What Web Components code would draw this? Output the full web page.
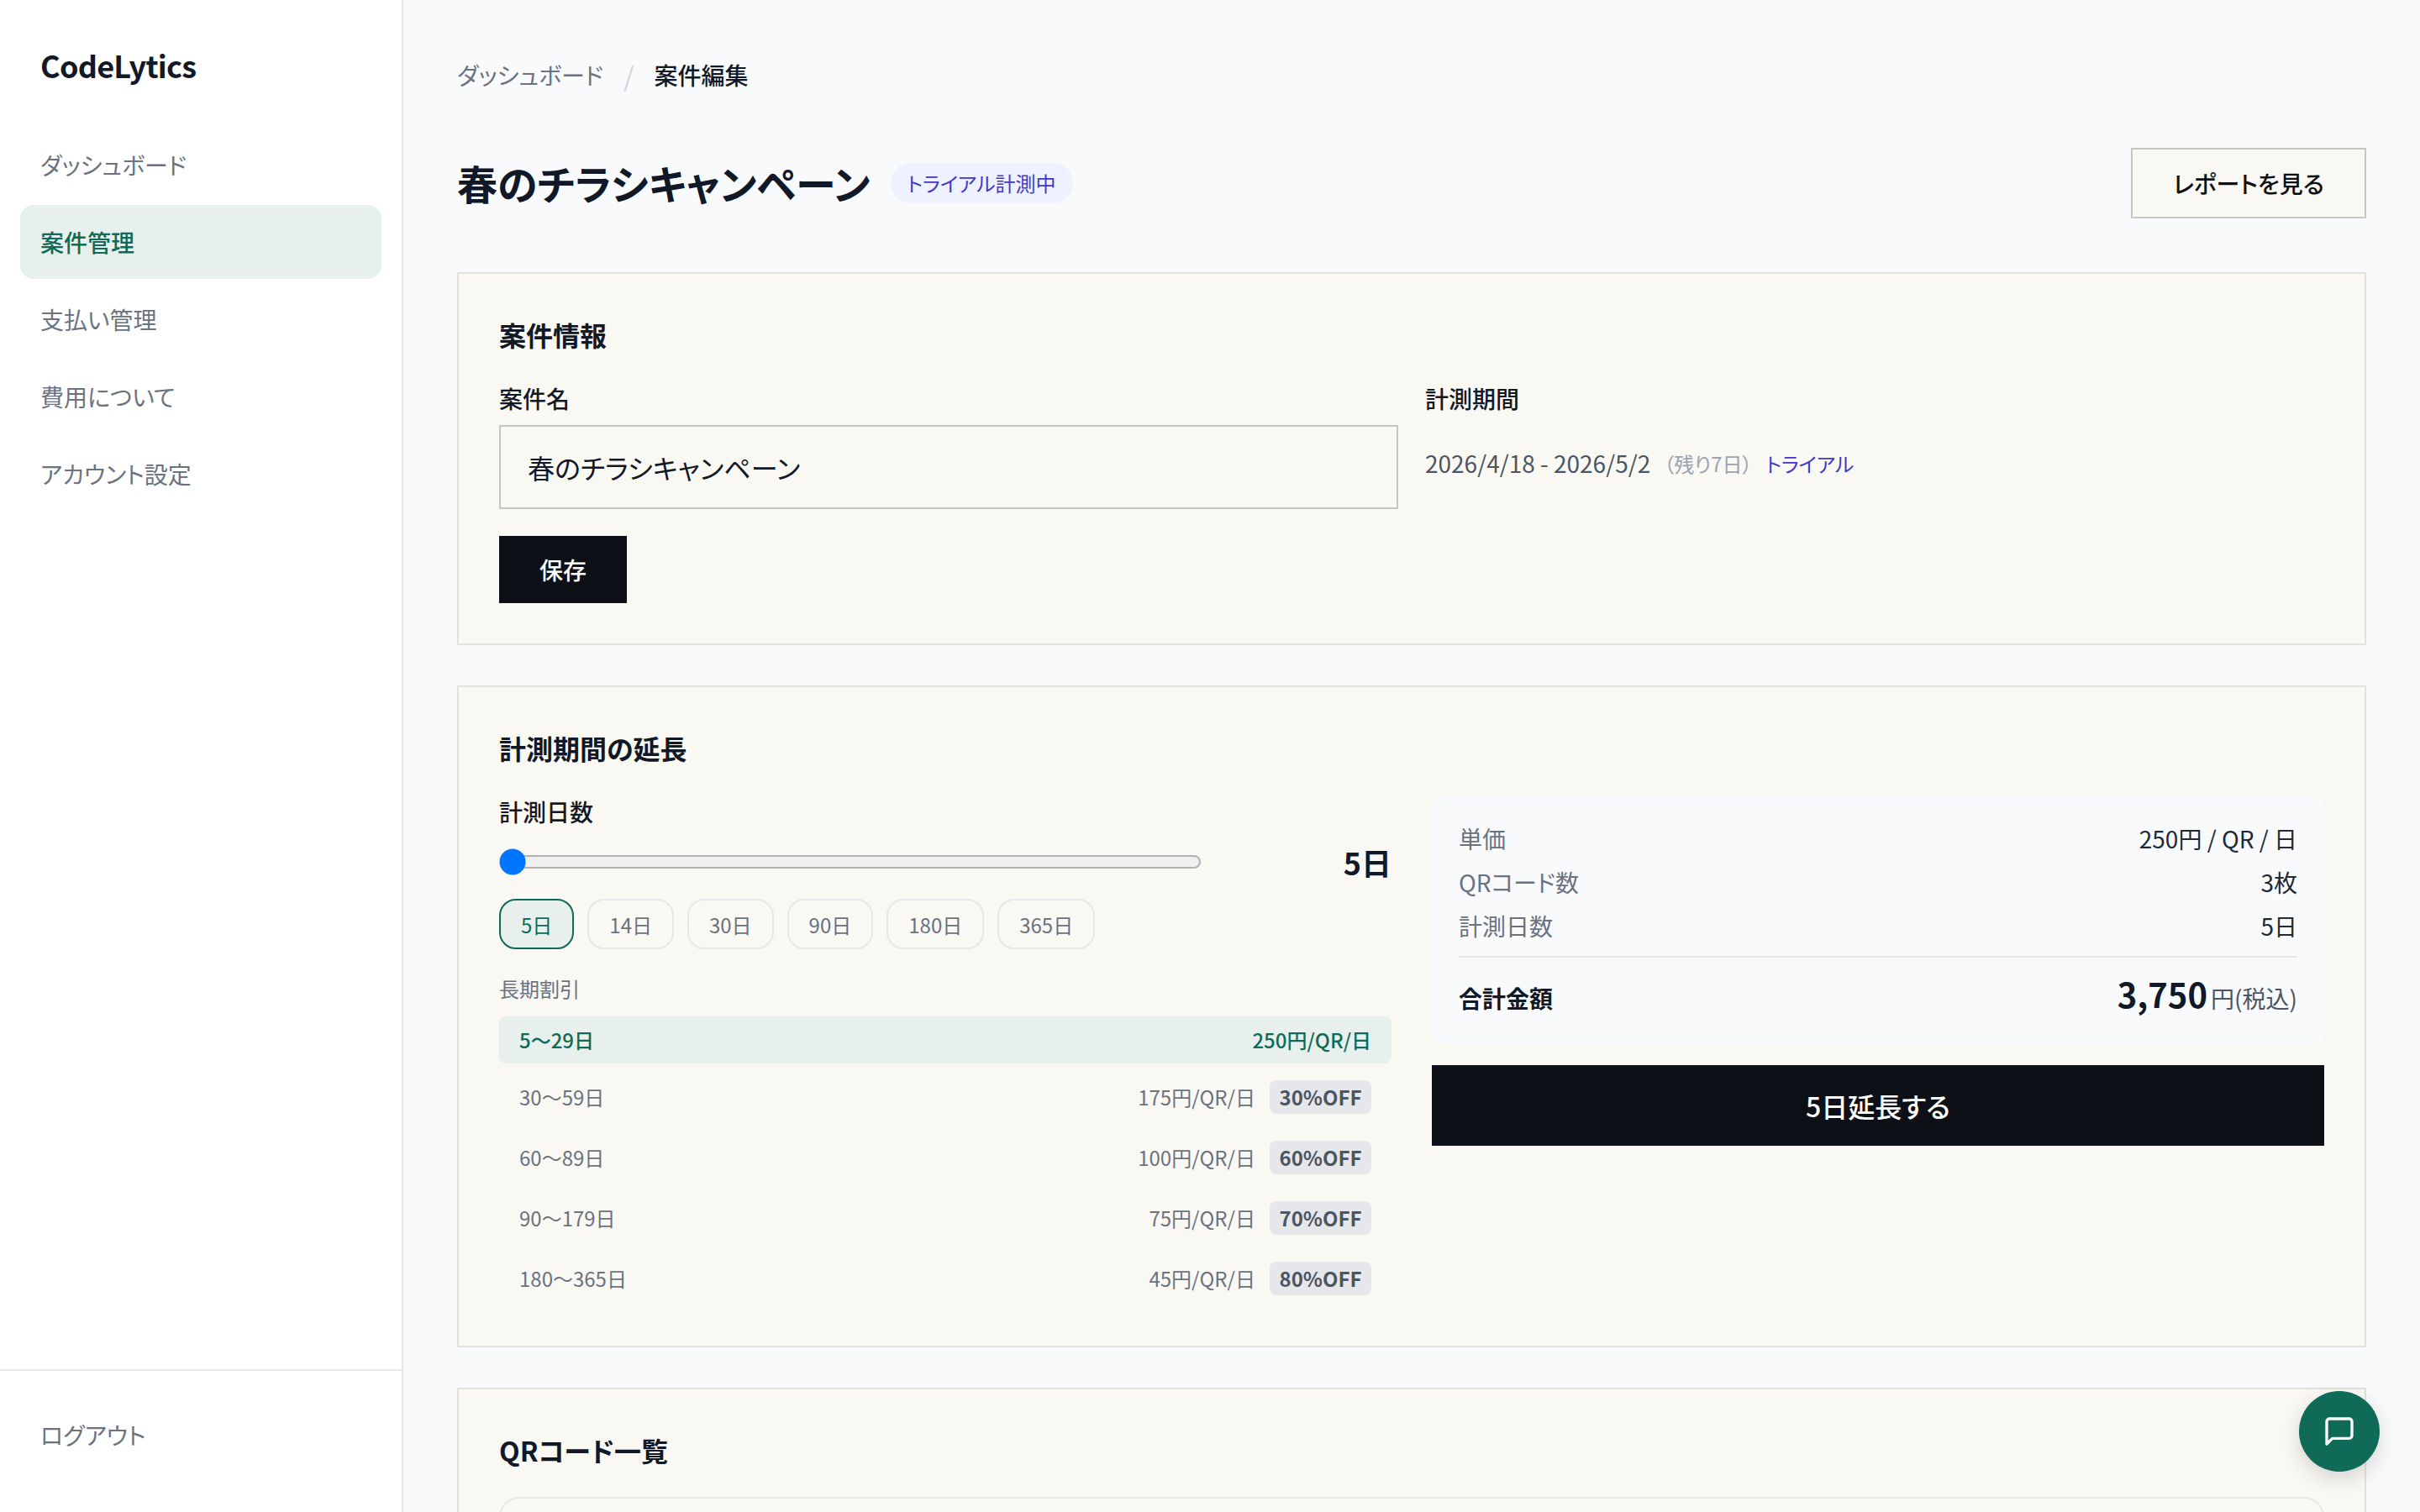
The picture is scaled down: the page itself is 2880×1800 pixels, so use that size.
<!DOCTYPE html>
<html lang="ja">
<head>
<meta charset="utf-8">
<title>案件編集</title>
<style>
  html, body { margin: 0; height: 100%; overflow: hidden; }
  body {
    font-family: "Noto Sans CJK JP", "Noto Sans", sans-serif;
    font-feature-settings: "palt";
    color: #111827;
    background: #f9fafb;
  }
</style>
</head>
<body>
<app-shell>
  <side-bar slot="side">
    <nav-item>ダッシュボード</nav-item>
    <nav-item active>案件管理</nav-item>
    <nav-item>支払い管理</nav-item>
    <nav-item>費用について</nav-item>
    <nav-item>アカウント設定</nav-item>
    <nav-item slot="foot">ログアウト</nav-item>
  </side-bar>

  <bread-crumbs parent="ダッシュボード" current="案件編集"></bread-crumbs>
  <page-head heading="春のチラシキャンペーン" badge="トライアル計測中" action="レポートを見る"></page-head>

  <info-card heading="案件情報"><campaign-info></campaign-info></info-card>

  <info-card heading="計測期間の延長">
    <two-col>
      <div>
        <days-picker></days-picker>
        <tier-list>
          <tier-row active range="5〜29日" price="250円/QR/日"></tier-row>
          <tier-row range="30〜59日" price="175円/QR/日" off="30%OFF"></tier-row>
          <tier-row range="60〜89日" price="100円/QR/日" off="60%OFF"></tier-row>
          <tier-row range="90〜179日" price="75円/QR/日" off="70%OFF"></tier-row>
          <tier-row range="180〜365日" price="45円/QR/日" off="80%OFF"></tier-row>
        </tier-list>
      </div>
      <div>
        <price-summary></price-summary>
        <wide-button>5日延長する</wide-button>
      </div>
    </two-col>
  </info-card>

  <info-card heading="QRコード一覧"><qr-box></qr-box></info-card>
</app-shell>
<chat-fab></chat-fab>

<script>
function define(name, css, html, setup) {
  customElements.define(name, class extends HTMLElement {
    constructor() {
      super();
      this.attachShadow({ mode: 'open' });
    }
    connectedCallback() {
      const attr = (k) => this.getAttribute(k) || '';
      this.shadowRoot.innerHTML = '<style>' + css + '</style>' + (typeof html === 'function' ? html(attr, this) : html);
      if (setup) setup(this);
    }
  });
}

define('app-shell', `
  :host { display: flex; height: 1800px; overflow: hidden; }
  main { flex: 1; min-width: 0; padding: 66px 64px 0; box-sizing: border-box; display: flex; flex-direction: column; }
`, `<slot name="side"></slot><main><slot></slot></main>`);

define('side-bar', `
  :host { display: flex; flex-direction: column; width: 480px; flex: none; height: 1800px; box-sizing: border-box;
          background: #fff; border-right: 2px solid #e5e7eb; }
  .logo { padding: 48px 48px 46px; font-size: 36px; letter-spacing: -0.72px; line-height: 58px; font-weight: 700; color: #111827; font-feature-settings: "palt"; }
  nav { display: flex; flex-direction: column; gap: 4px; padding: 0 24px; flex: 1; }
  .foot { border-top: 2px solid #e5e7eb; padding: 32px 24px 48px; }
`, `<div class="logo">CodeLytics</div><nav><slot></slot></nav><div class="foot"><slot name="foot"></slot></div>`);

define('nav-item', `
  :host { display: flex; align-items: center; height: 88px; padding: 0 24px; border-radius: 16px;
          font-size: 28px; color: #6b7280; font-feature-settings: "palt"; }
  :host([active]) { background: #e7f0ec; color: #0f6b58; font-weight: 500; }
`, `<slot></slot>`);

define('bread-crumbs', `
  :host { display: flex; align-items: center; height: 48px; font-size: 28px; margin-bottom: 64px; font-feature-settings: "palt"; }
  .p { color: #6b7280; }
  .s { color: #d1d5db; margin: 0 24px; font-size: 32px; }
  .c { color: #111827; font-weight: 500; }
`, (a) => `<span class="p">${a('parent')}</span><span class="s">/</span><span class="c">${a('current')}</span>`);

define('page-head', `
  :host { display: flex; align-items: center; justify-content: space-between; height: 84px; margin-bottom: 64px; font-feature-settings: "palt"; }
  .l { display: flex; align-items: center; gap: 24px; }
  h1 { margin: -2px 0 0; font-size: 48px; font-weight: 700; line-height: 72px; color: #111827; }
  .b { background: #eef2ff; color: #4338ca; font-size: 24px; line-height: 48px; padding: 0 20px; border-radius: 24px; }
  button { font: inherit; font-feature-settings: "palt"; font-size: 28px; font-weight: 500; width: 280px; height: 84px; box-sizing: border-box;
           background: #f9f8f3; color: #0d1117; border: 2px solid #c6c6c3; padding: 0; }
`, (a) => `<div class="l"><h1>${a('heading')}</h1><span class="b">${a('badge')}</span></div><button>${a('action')}</button>`);

define('info-card', `
  :host { display: block; background: #f9f8f3; border: 2px solid #e3e1dc; padding: 46px 48px 48px; margin-bottom: 48px; flex: none; font-feature-settings: "palt"; }
  h2 { margin: 0 0 30px; font-size: 32px; font-weight: 700; line-height: 52px; color: #111827; }
`, (a) => `<h2>${a('heading')}</h2><slot></slot>`);

define('campaign-info', `
  :host { display: grid; grid-template-columns: 1fr 1fr; column-gap: 32px; font-feature-settings: "palt"; }
  label { display: block; font-size: 28px; font-weight: 500; line-height: 44px; margin: -2px 0 10px; color: #111827; }
  input { display: block; width: 100%; height: 100px; box-sizing: border-box; padding: 0 32px; border: 2px solid #c6c6c3; background: #f9f8f3;
          font: inherit; font-feature-settings: "palt"; font-size: 32px; color: #111827; border-radius: 0; outline: none; }
  button { display: block; margin-top: 32px; width: 152px; height: 80px; padding: 0; border: 0; background: #0d1117; color: #fff;
           font: inherit; font-feature-settings: "palt"; font-size: 28px; font-weight: 500; }
  .period { height: 90px; display: flex; align-items: center; }
  .d { font-size: 28px; color: #4b5563; }
  .r { font-size: 24px; color: #9ca3af; margin-left: 16px; }
  .t { font-size: 24px; color: #4338ca; margin-left: 16px; }
`, `<div><label>案件名</label><input value="春のチラシキャンペーン"><button>保存</button></div>
    <div><label>計測期間</label><div class="period"><span class="d">2026/4/18 - 2026/5/2</span><span class="r">（残り7日）</span><span class="t">トライアル</span></div></div>`);

define('two-col', `:host { display: grid; grid-template-columns: 1fr 1fr; column-gap: 48px; margin-top: 0; }`, `<slot></slot>`);

define('days-picker', `
  :host { display: block; font-feature-settings: "palt"; }
  label { display: block; font-size: 28px; font-weight: 500; line-height: 44px; margin-top: -2px; color: #111827; }
  .row { display: flex; align-items: center; height: 52px; margin-top: 12px; justify-content: space-between; }
  input { zoom: 2; width: 418px; margin: 0; }
  .v { font-size: 36px; font-weight: 700; color: #111827; line-height: 52px; }
  .chips { display: flex; gap: 16px; margin-top: 18px; }
  .sub { font-size: 24px; color: #6b7280; line-height: 40px; margin-top: 27px; margin-bottom: 13px; }
`, `<label>計測日数</label>
    <div class="row"><input type="range" min="5" max="365" value="5"><span class="v">5日</span></div>
    <div class="chips"><day-chip selected>5日</day-chip><day-chip>14日</day-chip><day-chip>30日</day-chip><day-chip>90日</day-chip><day-chip>180日</day-chip><day-chip>365日</day-chip></div>
    <div class="sub">長期割引</div>`);

define('day-chip', `
  :host { display: flex; align-items: center; height: 60px; box-sizing: border-box; padding: 0 24px; border: 2px solid #e5e7eb; border-radius: 20px;
          font-size: 24px; color: #6b7280; }
  :host([selected]) { border-color: #0f6b58; background: #e7f0ec; color: #0f6b58; }
`, `<slot></slot>`);

define('tier-list', `:host { display: flex; flex-direction: column; gap: 8px; }`, `<slot></slot>`);

define('tier-row', `
  :host { display: flex; align-items: center; justify-content: space-between; padding: 12px 24px; border-radius: 8px;
          font-size: 24px; line-height: 32px; color: #6b7280; font-feature-settings: "palt"; }
  :host([active]) { background: #e7f0ec; color: #0f6b58; font-weight: 500; }
  .r { display: flex; align-items: center; gap: 17px; }
  .o { display: block; background: #e5e7eb; color: #4b5563; font-weight: 700; line-height: 40px; width: 121px; text-align: center; border-radius: 8px; }
`, (a) => `<span>${a('range')}</span><span class="r"><span>${a('price')}</span>${a('off') ? `<span class="o">${a('off')}</span>` : ''}</span>`);

define('price-summary', `
  :host { display: block; background: #f9fafb; border-radius: 16px; padding: 30px 32px 32px; height: 298px; box-sizing: border-box; font-feature-settings: "palt"; }
  .line { display: flex; justify-content: space-between; align-items: center; height: 44px; font-size: 28px; margin-bottom: 8px; }
  .k { color: #6b7280; }
  .v { color: #1f2937; }
  .total { display: flex; justify-content: space-between; align-items: baseline; border-top: 2px solid #e5e7eb; margin-top: 14px; padding-top: 16px; font-size: 28px; line-height: 54px; }
  .total b { font-weight: 700; color: #111827; }
  .amt { font-size: 40px; font-weight: 700; color: #111827; }
  .unit { color: #4b5563; margin-left: 4px; }
`, `<div class="line"><span class="k">単価</span><span class="v">250円 / QR / 日</span></div>
    <div class="line"><span class="k">QRコード数</span><span class="v">3枚</span></div>
    <div class="line"><span class="k">計測日数</span><span class="v">5日</span></div>
    <div class="total"><b>合計金額</b><span><span class="amt">3,750</span><span class="unit">円(税込)</span></span></div>`);

define('wide-button', `
  :host { display: flex; align-items: center; justify-content: center; height: 96px; margin-top: 24px; background: #0d1117; color: #fff;
          font-size: 32px; font-weight: 500; font-feature-settings: "palt"; }
`, `<slot></slot>`);

define('qr-box', `
  :host { display: block; height: 200px; border: 2px solid #e5e7eb; border-radius: 24px; background: #f9f8f3; }
`, ``);

define('chat-fab', `
  :host { position: fixed; right: 48px; bottom: 48px; width: 96px; height: 96px; border-radius: 50%; background: #0f6b58;
          display: flex; align-items: center; justify-content: center; box-shadow: 0 8px 24px rgba(0,0,0,.15); }
  svg { display: block; }
`, `<svg width="40" height="40" viewBox="0 0 24 24" fill="none" stroke="#fff" stroke-width="2" stroke-linecap="round" stroke-linejoin="round"><path d="M21 15a2 2 0 0 1-2 2H7l-4 4V5a2 2 0 0 1 2-2h14a2 2 0 0 1 2 2z"/></svg>`);
</script>
</body>
</html>
